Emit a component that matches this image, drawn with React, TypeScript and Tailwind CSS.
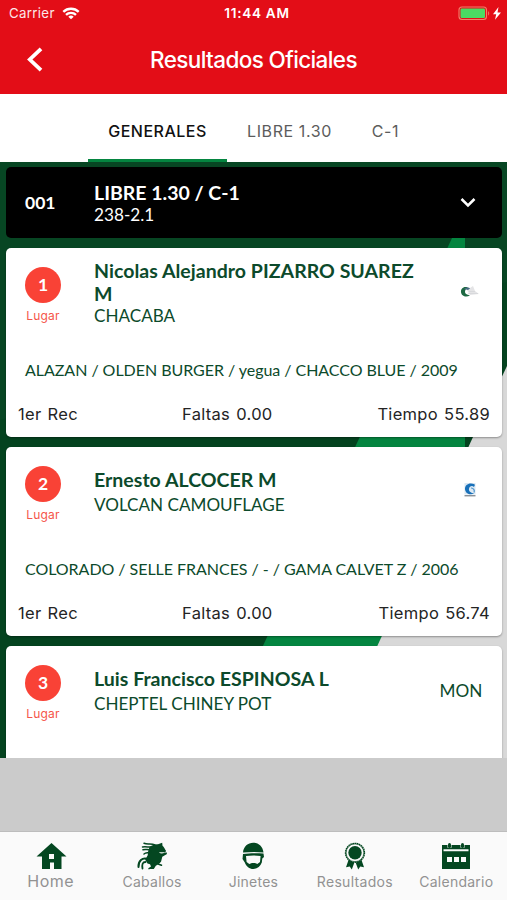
import React from "react";

const LATO = "font-['Lato','Open_Sans',sans-serif]";
const INTER = "font-['Inter','Roboto',sans-serif]";

function StatusBar() {
  return (
    <div className="grid h-[27px] grid-cols-3 items-center pl-[9px] pr-[5px] text-[13.3px] leading-[27px] text-white">
      <div className="flex items-center gap-[7px]">
        <span className="tracking-[0.3px] opacity-90">Carrier</span>
        <svg width="18" height="13" viewBox="0 0 18 13" fill="none" stroke="#fff" strokeWidth="2.3">
          <path d="M1.3 4.9a11 11 0 0 1 15.4 0" />
          <path d="M4 7.9a7 7 0 0 1 10 0" />
          <path d="M9 12.3 6.3 9.7a4 4 0 0 1 5.4 0z" fill="#fff" stroke="none" />
        </svg>
      </div>
      <span className="pl-[3px] text-center text-[13.6px] font-semibold tracking-[0.7px]">11:44 AM</span>
      <div className="flex items-center justify-end">
        <svg width="44" height="15" viewBox="0 0 44 15">
          <rect x="1" y="1" width="27.5" height="12.5" rx="3" fill="none" stroke="#f0806a" strokeWidth="1.1" />
          <rect x="2.5" y="2.500" width="24.5" height="9.5" rx="1.2" fill="#4bdb63" />
          <path d="M30 5.2v4.2c1.6-.5 1.6-3.700 0-4.200z" fill="#f0685c" />
          <path d="M40.500 1 35 8.200h3.200l-1.200 5.600 6-7.400h-3.500z" fill="#fff" />
        </svg>
      </div>
    </div>
  );
}

function Header() {
  return (
    <header className="h-[93.5px] bg-[#e30d17]">
      <StatusBar />
      <div className="grid h-[66px] grid-cols-[1fr_auto_1fr] items-center">
        <svg className="-mt-px ml-[26px]" width="17" height="25" viewBox="0 0 17 25" fill="none" stroke="#fff" strokeWidth="3.8">
          <path d="M15 1.800 3.800 12.500 15 23.200" />
        </svg>
        <h1 className="text-[22.500px] font-medium leading-[30px] tracking-[-0.620px] text-white">Resultados Oficiales</h1>
        <span />
      </div>
    </header>
  );
}

function Tabs() {
  return (
    <nav className="flex h-[68.500px] bg-white pl-[88px] text-[16px] leading-[75px] text-[#5c5c5c]">
      <div className="h-full w-[139px] border-b-[3px] border-[#048540] text-center font-medium tracking-[0.500px] text-[#111]">
        GENERALES
      </div>
      <div className="w-[125px] text-center tracking-[0.600px]">LIBRE 1.30</div>
      <div className="w-[67px] text-center tracking-[0.600px]">C-1</div>
    </nav>
  );
}

function Backdrop() {
  return (
    <svg className="absolute inset-0" width="507" height="596" viewBox="0 162 507 596">
      <rect y="162" width="507" height="596" fill="#04431f" />
      <path d="M0 162h507v120L0 420z" fill="#074623" />
      <path d="M465 210v260L330 758H211z" fill="#048540" />
      <path d="M507 366v392H326L473 437z" fill="#d8d8d8" />
    </svg>
  );
}

type Entry = {
  place: string;
  rider: string[];
  horse: string;
  detail?: string;
  faults?: string;
  time?: string;
  mark: React.ReactNode;
};

const clubLogo = (
  <svg width="20" height="14" viewBox="0 0 20 14">
    <path d="M7 5 13 1l2 5 4 3-9 1z" fill="#e4e4e6" />
    <path d="M8 2.500C3.500.8.8 3.600 1 7c.2 4 5.200 6 9 3.300C6.500 10 4.800 8.500 5 6.500 5.200 4.500 6.500 3.300 8 2.500z" fill="#1d6842" />
    <path d="M4 4c2-2 5-2 6-.5L8 5z" fill="#486b83" />
    <path d="M9 6.500h6M8 8.500h10" stroke="#d0d2d5" strokeWidth=".6" />
  </svg>
);

const waveLogo = (
  <svg className="-mt-[2px]" width="14" height="16" viewBox="0 0 14 16">
    <rect x="1.500" y="1" width="11" height="11.500" fill="#dce8f2" />
    <path d="M11.500 2.200C6-.2 1.500 3 2 7.200c.4 4 4.700 6.300 9.200 4.300C7.500 11 5.500 9 6 6.800c.5-2.600 3-3.600 5-1.800l.8-1.700z" fill="#1870b9" />
    <path d="M8 6c2.500 0 4 2 3 4.500" stroke="#4d94ca" strokeWidth="1.200" fill="none" />
    <path d="M1.500 13.800h11" stroke="#59636d" strokeWidth="1" />
  </svg>
);

const entries: Entry[] = [
  {
    place: "1",
    rider: ["Nicolas Alejandro PIZARRO SUAREZ", "M"],
    horse: "CHACABA",
    detail: "ALAZAN / OLDEN BURGER / yegua / CHACCO BLUE / 2009",
    faults: "Faltas 0.00",
    time: "Tiempo 55.89",
    mark: clubLogo,
  },
  {
    place: "2",
    rider: ["Ernesto ALCOCER M"],
    horse: "VOLCAN CAMOUFLAGE",
    detail: "COLORADO / SELLE FRANCES / - / GAMA CALVET Z / 2006",
    faults: "Faltas 0.00",
    time: "Tiempo 56.74",
    mark: waveLogo,
  },
  {
    place: "3",
    rider: ["Luis Francisco ESPINOSA L"],
    horse: "CHEPTEL CHINEY POT",
    mark: <span className="mr-[18px] mt-[2px] text-[17.200px]">MON</span>,
  },
];

function ResultCard({ entry }: { entry: Entry }) {
  const wrapped = entry.rider.length > 1;
  return (
    <article className={`h-[189px] shrink-0 rounded-[5px] bg-white text-[#0c4a2b] shadow-[0_1px_2px_rgba(0,0,0,0.35)] ${LATO}`}>
      <div className="flex h-[110px]">
        <div className="flex w-[74px] shrink-0 flex-col items-center pt-[19px]">
          <div className="flex size-9 items-center justify-center rounded-full bg-[#f94236] text-[17.500px] font-bold text-white">
            {entry.place}
          </div>
          <span className={`mt-[5px] text-[12px] leading-4 tracking-[0.200px] text-[#f55549] ${INTER}`}>Lugar</span>
        </div>
        <div className={`ml-[14px] w-[345px] shrink-0 whitespace-nowrap ${wrapped ? "pt-[11px]" : "pt-[21px]"}`}>
          {entry.rider.map((line) => (
            <div key={line} className="text-[19.500px] font-bold leading-[23px] tracking-[0.030px]">
              {line}
            </div>
          ))}
          <div className={`text-[17.100px] leading-[21px] ${wrapped ? "" : "mt-[3px]"}`}>{entry.horse}</div>
        </div>
        <div className="flex h-[88px] w-[62px] items-center justify-center">{entry.mark}</div>
      </div>
      {entry.detail && (
        <>
          <div className="h-[24px] whitespace-nowrap pl-[19px] text-[16px] leading-[24px] tracking-[-0.040px]">{entry.detail}</div>
          <div className={`grid h-[64px] grid-cols-[164px_auto_1fr] pl-3 pr-[12px] text-[16.500px] leading-[64px] tracking-[0.300px] text-[#242424] [word-spacing:1.200px] ${INTER}`}>
            <span>1er Rec</span>
            <span>{entry.faults}</span>
            <span className="text-right">{entry.time}</span>
          </div>
        </>
      )}
    </article>
  );
}

function CategoryBar() {
  return (
    <div className={`flex h-[71px] shrink-0 items-center rounded-[5px] bg-black text-white ${LATO}`}>
      <span className="ml-[19px] mt-[2px] w-[69px] text-[17.500px] font-bold">001</span>
      <div className="flex-1 pt-px">
        <div className="text-[19.500px] font-bold leading-[22px]">LIBRE 1.30 / C-1</div>
        <div className="text-[17.200px] leading-[21px]">238-2.1</div>
      </div>
      <svg className="mr-[26px] mt-px" width="16" height="12" viewBox="0 0 16 12" fill="none" stroke="#fff" strokeWidth="2.500">
        <path d="m1.500 2 6.500 6.500L14.500 2" />
      </svg>
    </div>
  );
}

const HomeIcon = () => (
  <svg width="32" height="28" viewBox="0 0 32 28" fill="#044721">
    <path fillRule="evenodd" d="M16.500 1 31.500 14.500H26.500V27H19V20.500h-4V27H7V14.500H1.500zM14 12v5h5V12z" />
  </svg>
);

const HorseIcon = () => (
  <svg width="32" height="28" viewBox="0 0 32 28" fill="#044721">
    <path d="M13.500 5c3-2 5-3 8.500-2.800L26.200.8l.3 3c1.500 1.400 2.300 3.200 3.500 5-.2 1.600-1.400 1.800-2.700 1.500-1.500-.3-3-.2-4.500.2 2 1.300 3.500 1.300 5.200.6l2.500-.8.5 1.700-4.700 2.800-1.200 4.700c-1.500 2.300-3.500 3-5.300 4.300l-2 3.200h-4l1.200-2.500-1-2.300-2.500-.8-2.300-3.700 2.500-4.500.5-4z" />
    <g fill="none" stroke="#044721" strokeLinecap="round">
      <path d="M19 3C15 .8 12 2.800 8 1.300M17 4.800c-4 1-6-.5-10.500.2M15 7.500c-3 .8-5-.8-8 .2M14.500 10.200c-3 1-4.500.2-6.500 1.800" strokeWidth="1.500" />
      <path d="M11 16.800C6.500 15.500 2.200 18.500 2.500 25" strokeWidth="2" />
      <path d="M9.500 20c-3 0-3.700 2.500-3 6.500" strokeWidth="1.800" />
      <path d="m17.500 24-4.500 2.700M22 22l3.500 1.300" strokeWidth="1.500" />
    </g>
  </svg>
);

const RiderIcon = () => (
  <svg width="32" height="28" viewBox="0 0 32 28" fill="#044721">
    <path d="M6 10.500C6.500 4.500 11 .8 16.200.8s9.700 3.700 10.300 9.700c-6.500-.8-14-.6-20.500 0z" />
    <path d="M6 12c6-.9 14-1 20.500-.4l.5 3.400-1.700 1.500-.5 4c-1.500 4-4.500 6.500-8.500 6.500s-7-2.500-8.500-6.500L5.500 17zm3 2 .6 6 2.700 2c2-1.500 6-1.500 8 0l2.700-2 .6-6c-4.500-.7-10-.7-14.600 0z" fillRule="evenodd" />
  </svg>
);

const RibbonIcon = () => (
  <svg width="32" height="28" viewBox="0 0 32 28" fill="#044721">
    <circle cx="16" cy="10.800" r="9.500" fill="none" stroke="#044721" strokeWidth="1.300" strokeDasharray="1.700 .5" />
    <circle cx="16" cy="10.800" r="8.900" fill="none" stroke="#044721" strokeWidth=".7" />
    <circle cx="16" cy="10.800" r="6.700" />
    <path d="m9.500 18 5.800 2.800-2.500 6.700-2.100-3-3.700.8zM22.500 18l-5.800 2.800 2.500 6.700 2.100-3 3.700.8z" />
  </svg>
);

const CalendarIcon = () => (
  <svg width="32" height="28" viewBox="0 0 32 28" fill="#044721">
    <path fillRule="evenodd" d="M2 3h5.500v2.800h4V3h9v2.800h4V3H30v24H2zm1.500 4.200v2h25v-2zM7 15v5h5v-5zm7 0v5h5v-5zm7 0v5h5v-5z" />
    <rect x="8" y="1" width="3" height="5" rx="1.500" />
    <rect x="21" y="1" width="3" height="5" rx="1.500" />
  </svg>
);

const navItems = [
  { label: "Home", icon: <HomeIcon />, cls: "text-[16px] tracking-[0.500px] mt-0" },
  { label: "Caballos", icon: <HorseIcon />, cls: "text-[14px] tracking-[0.250px] mt-px" },
  { label: "Jinetes", icon: <RiderIcon />, cls: "text-[14px] tracking-[0.250px] mt-px" },
  { label: "Resultados", icon: <RibbonIcon />, cls: "text-[14px] tracking-[0.300px] mt-px" },
  { label: "Calendario", icon: <CalendarIcon />, cls: "text-[14px] tracking-[0.250px] mt-px" },
];

export default function App() {
  return (
    <div className={`flex h-[900px] w-[507px] flex-col overflow-hidden bg-[#cbcbcb] ${INTER}`}>
      <Header />
      <Tabs />
      <main className="relative h-[596px] shrink-0 overflow-hidden">
        <Backdrop />
        <div className="relative flex flex-col gap-[10px] pl-[6px] pr-[5px] pt-[5px]">
          <CategoryBar />
          {entries.map((entry) => (
            <ResultCard key={entry.place} entry={entry} />
          ))}
        </div>
      </main>
      <footer className="mt-auto grid h-[69px] grid-cols-5 border-t border-[#bdbdbd] bg-[#fafafa] pt-[10px] text-[#929292]">
        {navItems.map((item) => (
          <div key={item.label} className="flex flex-col items-center">
            {item.icon}
            <span className={`leading-[22px] ${item.cls}`}>{item.label}</span>
          </div>
        ))}
      </footer>
    </div>
  );
}
